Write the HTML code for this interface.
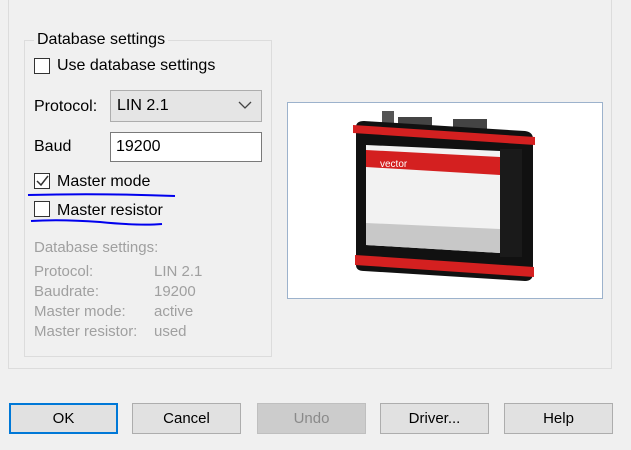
<!DOCTYPE html><html><head><style>
body{margin:0;width:631px;height:450px;background:#f0f0f0;position:relative;overflow:hidden;font-family:"Liberation Sans",sans-serif;font-size:16px;color:#000}
.a{position:absolute}
.cb{position:absolute;width:14px;height:14px;border:1px solid #333;background:#fff}
.btn{position:absolute;top:403px;width:107px;height:29px;border:1px solid #adadad;background:#e1e1e1;text-align:center;line-height:29px;font-size:15px}
.g{position:absolute;color:#a0a0a0;font-size:15px;line-height:20px}
</style></head><body>
<div class="a" style="left:8px;top:-5px;width:602px;height:373px;border:1px solid #dcdcdc;border-top:none"></div>
<div class="a" style="left:24px;top:40px;width:246px;height:315px;border:1px solid #dcdcdc"></div>
<div class="a" style="left:34px;top:31px;padding:0 3px;background:#f0f0f0">Database settings</div>
<div class="cb" style="left:34px;top:58px"></div>
<div class="a" style="left:57px;top:57px">Use database settings</div>
<div class="a" style="left:34px;top:98px">Protocol:</div>
<div class="a" style="left:110px;top:90px;width:150px;height:30px;border:1px solid #adadad;background:#e5e5e5"></div>
<div class="a" style="left:117px;top:97px">LIN 2.1</div>
<svg class="a" style="left:238px;top:100px" width="14" height="10"><path d="M1 2 L7 8 L13 2" stroke="#444" stroke-width="1.3" fill="none"/></svg>
<div class="a" style="left:34px;top:138px">Baud</div>
<div class="a" style="left:110px;top:132px;width:150px;height:28px;border:1px solid #7a7a7a;background:#fff"></div>
<div class="a" style="left:116px;top:138px">19200</div>
<div class="cb" style="left:34px;top:173px"></div>
<svg class="a" style="left:35px;top:174px" width="14" height="14"><path d="M2 7 L6 11 L13 2" stroke="#333" stroke-width="1.5" fill="none"/></svg>
<div class="a" style="left:57px;top:173px">Master mode</div>
<div class="cb" style="left:34px;top:201px"></div>
<div class="a" style="left:57px;top:202px">Master resistor</div>
<svg class="a" style="left:0;top:0" width="300" height="240"><path d="M28 195 Q100 193 175 196" stroke="#0000ee" stroke-width="2" fill="none"/><path d="M31 221 Q60 219 100 222 Q140 226 162 224" stroke="#0000ee" stroke-width="2" fill="none"/></svg>
<div class="g" style="left:34px;top:238px">Database settings:</div>
<div class="g" style="left:34px;top:262px">Protocol:<br>Baudrate:<br>Master mode:<br>Master resistor:</div>
<div class="g" style="left:154px;top:262px">LIN 2.1<br>19200<br>active<br>used</div>
<div class="a" style="left:287px;top:102px;width:314px;height:195px;border:1px solid #9cb2cc;background:#fff"></div>
<svg class="a" style="left:350px;top:105px" width="190" height="190">
<rect x="32" y="6" width="12" height="14" fill="#555"/><rect x="48" y="12" width="34" height="12" fill="#444"/><rect x="103" y="14" width="34" height="12" fill="#444"/>
<path d="M6 22 Q6 16 14 16 L175 26 Q183 27 183 34 L183 168 Q183 176 175 176 L14 166 Q6 166 6 160 Z" fill="#111"/>
<path d="M3 20 L185 32 L185 40 L3 28 Z" fill="#d42020"/>
<path d="M5 150 L184 162 L184 172 L5 160 Z" fill="#d42020"/>
<path d="M16 40 L150 46 L150 148 L16 140 Z" fill="#f2f2f2"/>
<path d="M16 45 L150 52 L150 70 L16 62 Z" fill="#d42020"/>
<path d="M16 118 L150 124 L150 148 L16 140 Z" fill="#c8c8c8"/>
<rect x="150" y="44" width="22" height="108" fill="#1a1a1a"/>
<text x="30" y="62" font-size="10" fill="#fff" font-family="Liberation Sans">vector</text>
</svg>
<div class="btn" style="left:9px;border:2px solid #0078d7;width:105px;height:27px;line-height:27px">OK</div>
<div class="btn" style="left:132px">Cancel</div>
<div class="btn" style="left:257px;background:#cccccc;border-color:#bfbfbf;color:#8a8a8a">Undo</div>
<div class="btn" style="left:380px">Driver...</div>
<div class="btn" style="left:504px">Help</div>
</body></html>
